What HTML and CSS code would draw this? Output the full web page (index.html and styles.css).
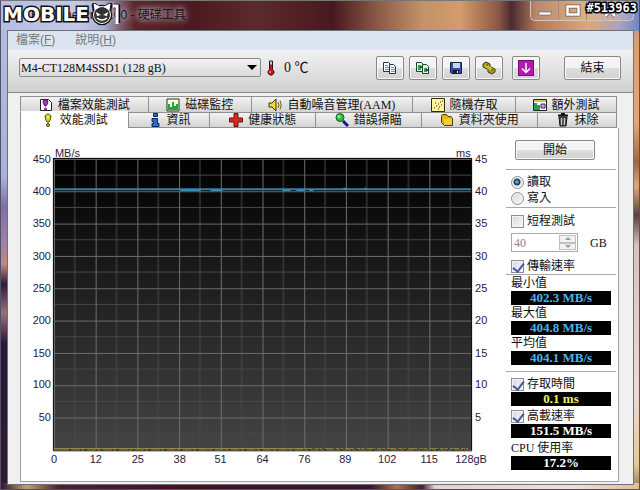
FILE: index.html
```html
<!DOCTYPE html>
<html lang="zh-Hant">
<head>
<meta charset="utf-8">
<title>HD Tune Pro - 硬碟工具</title>
<link rel="stylesheet" href="styles.css">
</head>
<body>
<div class="window">
  <header class="titlebar">
    <h1 class="title">HD Tune Pro 5.00 - 硬碟工具</h1>
    <div class="controls">
      <button class="ctl" aria-label="Minimize"><svg width="16" height="14" viewBox="0 0 16 14"><rect x="2" y="8" width="12" height="3" fill="#fff" stroke="#665c5c" stroke-width=".6"/></svg></button>
      <button class="ctl" aria-label="Maximize"><svg width="16" height="14" viewBox="0 0 16 14"><rect x="2.5" y="2.500" width="11" height="8" fill="none" stroke="#665c5c" stroke-width="4"/><rect x="2.500" y="2.500" width="11" height="8" fill="none" stroke="#fff" stroke-width="2.500"/></svg></button>
      <button class="ctl wide" aria-label="Close"><svg width="16" height="14" viewBox="0 0 16 14"><path d="M3 2 13 12M13 2 3 12" stroke="#665c5c" stroke-width="4"/><path d="M3 2 13 12M13 2 3 12" stroke="#fff" stroke-width="2.500"/></svg></button>
    </div>
    <div class="watermark"><span>MOBILE</span><svg width="30" height="23" viewBox="0 0 30 23"><g stroke="#111" stroke-width="4.500" fill="#111" stroke-linejoin="round"><circle cx="11" cy="12" r="8"/><path d="M4 8 3 2l5 3M18 8l1-6-5 3M23 3h4v17"/></g><circle cx="11" cy="12" r="8" fill="#333" stroke="#fff" stroke-width="2"/><path d="M4 7 3 1l6 3M18 7l1-6-6 3" fill="#fff" stroke="#fff"/><path d="M5 9l5 3-4 1zM17 9l-5 3 4 1z" fill="#fff"/><path d="M6 15q5 4 10 0" fill="none" stroke="#fff" stroke-width="1.500"/><path d="M22 3h4v18" fill="none" stroke="#fff" stroke-width="3"/></svg></div>
    <div class="serial">#513963</div>
  </header>

  <main class="client">
    <nav class="menu"><a href="#">檔案(<u>F</u>)</a><a href="#">說明(<u>H</u>)</a></nav>

    <div class="toolbar">
      <div class="drive">
        <select aria-label="Drive"><option>M4-CT128M4SSD1 (128 gB)</option></select>
        <svg class="arrow" width="10" height="5" viewBox="0 0 10 5"><path d="M0 0h10L5 5z"/></svg>
      </div>
      <div class="temp">
        <svg width="8" height="16" viewBox="0 0 8 16"><path d="M2.500 1h3v8.500a3 3 0 1 1-3 0z" fill="#c01818" stroke="#301010"/><path d="M3 1.500h2v3H3z" fill="#8de"/><circle cx="3" cy="12" r="1" fill="#f99"/></svg>
        <span>0 ℃</span>
      </div>
      <div class="tools">
        <button class="tool" aria-label="Copy text"><svg width="16" height="16" viewBox="0 0 16 16"><g fill="#f4f8ff" stroke="#22384e"><path d="M1.500 2.500h5l2 2v7h-7z"/><path d="M7.500 4.500h4l2 2v7h-6z"/></g><path d="M3 5.500h3M3 7.500h4M3 9.500h4M9 7.500h3M9 9.500h4M9 11.500h4" stroke="#38a0e8"/></svg></button>
        <button class="tool" aria-label="Copy image"><svg width="16" height="16" viewBox="0 0 16 16"><g fill="#e8f8e8" stroke="#223e2e"><path d="M1.500 2.500h5l2 2v7h-7z"/><path d="M7.500 4.500h4l2 2v7h-6z"/></g><path d="M3 5h3v5H3zM9 8h3v4H9z" fill="#28a848"/><path d="M5 6h2v2H5zM11 9h2v2h-2z" fill="#165828"/></svg></button>
        <button class="tool" aria-label="Save"><svg width="16" height="16" viewBox="0 0 16 16"><path d="M2.500 2.500h11v11h-10l-1-1z" fill="#3848a8" stroke="#182050"/><path d="M5 3h7v5H5z" fill="#c8d4e8"/><path d="M5 10h6v3H5z" fill="#15183a"/><path d="M9 11h1v2H9z" fill="#fff"/></svg></button>
        <button class="tool" aria-label="Settings"><svg width="16" height="16" viewBox="0 0 16 16"><g fill="#a8a018" stroke="#38380a"><path d="m2 4 3-2 4 2v3L6 9 2 7z"/><path d="m7 9 3-2 4 2v3l-3 2-4-2z"/></g><path d="m4 5 7 5" stroke="#c8c040" stroke-width="3"/><path d="M5 5h2M10 10h2" stroke="#38380a"/></svg></button>
        <button class="tool last" aria-label="Download"><svg width="16" height="16" viewBox="0 0 16 16"><rect x=".5" y=".5" width="15" height="15" fill="#b419b4" stroke="#701070"/><path d="M8 3v9M4 8.500 8 12.500l4-4" fill="none" stroke="#fff" stroke-width="1.500"/></svg></button>
        <button class="exit">結束</button>
      </div>
    </div>

    <div class="content">
      <div class="tabs" role="tablist">
        <div class="tabrow back">
          <button class="tab t128" role="tab"><svg viewBox="0 0 14 14"><path d="M1.500 1.500h8l3 3v8h-11z" fill="#fff" stroke="#222"/><path d="M4 3q3-3 5 0 0 3-2 5H6Q4 6 4 3z" fill="#b030c0" stroke="#501060"/><circle cx="6.500" cy="11" r="1.500" fill="#902090"/></svg>檔案效能測試</button>
          <button class="tab t103" role="tab"><svg viewBox="0 0 14 14"><path d="M1 1h12v12H1z" fill="#ffffd8" stroke="#183818"/><path d="M2 12V6h2v3h2V4h2v4h2V6h2v6z" fill="#18a848"/></svg>磁碟監控</button>
          <button class="tab t162" role="tab"><svg viewBox="0 0 14 14"><path d="M1 5h3l4-4v12L4 9H1z" fill="#f0e020" stroke="#383008"/><path d="M10 4q2 3 0 6M12 2.500q2.500 4.500 0 9" fill="none" stroke="#68601a"/></svg>自動噪音管理(AAM)</button>
          <button class="tab t103" role="tab"><svg viewBox="0 0 14 14"><path d="M.5.500h13v13H.500z" fill="#fff4a0" stroke="#302810"/><path d="M3 10h1M5 8h1M4 5h1M8 9h1M7 6h1M9 4h1M11 3h1M10 7h1M7 11h1" stroke="#906020" stroke-width="1.500"/></svg>隨機存取</button>
          <button class="tab t101" role="tab"><svg viewBox="0 0 14 14"><path d="M.5 1.500h13v11H.500z" fill="#fff" stroke="#222"/><path d="M1 2h12v2H1z" fill="#d8c050"/><path d="M1 5h3v2h3v5H1z" fill="#20a050"/><path d="M8 6h4v4H8z" fill="#b8a0e0" stroke="#402880"/></svg>額外測試</button>
        </div>
        <div class="tabrow front">
          <button class="tab t108 active" role="tab" aria-selected="true"><svg viewBox="0 0 14 14"><path d="M4 3q3-4 6 0 0 3-2 6H6Q4 6 4 3z" fill="#e8e020" stroke="#484808"/><circle cx="7" cy="12" r="1.500" fill="#c8c020" stroke="#484808"/></svg>效能測試</button>
          <button class="tab t82" role="tab"><svg viewBox="0 0 14 14"><path d="M5.500.500h4v3h-4zM4 5.500h5.500v5H11v3H4v-3h1.500v-2H4z" fill="#2070d0" stroke="#082850"/></svg>資訊</button>
          <button class="tab t106" role="tab"><svg viewBox="0 0 14 14"><path d="M5 .5h4V5h4.500v4H9v4.500H5V9H.500V5H5z" fill="#d82820" stroke="#681010"/></svg>健康狀態</button>
          <button class="tab t106" role="tab"><svg viewBox="0 0 14 14"><path d="m8 8 5 5" stroke="#101898" stroke-width="3"/><circle cx="5" cy="4.500" r="4" fill="#38c040" stroke="#106018"/><circle cx="4" cy="3.500" r="1.500" fill="#98f098"/></svg>錯誤掃瞄</button>
          <button class="tab t117" role="tab"><svg viewBox="0 0 14 14"><path d="M1.500 3.500v-1l1-1h4l1.500 2h3l1.500 2v7h-8l-3-3z" fill="#e0b818" stroke="#483808"/><path d="M4 6h8v6H5z" fill="#f0d040"/></svg>資料夾使用</button>
          <button class="tab t79" role="tab"><svg viewBox="0 0 14 14"><path d="M3 4h8l-1 9H4z" fill="#555" stroke="#111"/><path d="M2 2.500h10M5 1h4" stroke="#111" stroke-width="2"/><path d="M5.500 5v7M8.500 5v7" stroke="#ccc"/></svg>抹除</button>
        </div>
      </div>

      <div class="page">
        <svg class="chart" viewBox="20 128 486 350">
          <defs>
            <linearGradient id="plot" x1="0" y1="0" x2="0" y2="1"><stop offset="0" stop-color="#000"/><stop offset="1" stop-color="#444"/></linearGradient>
            <pattern id="minor" x="53" y="159" width="41.800" height="32.400" patternUnits="userSpaceOnUse"><path d="M20.900 0v32.400M0 16.200h41.800" stroke="#484848" fill="none"/></pattern>
            <pattern id="major" x="53" y="159" width="41.800" height="32.400" patternUnits="userSpaceOnUse"><path d="M.5 0v32.400M0 .500h41.800" stroke="#6c6c6c" fill="none"/></pattern>
          </defs>
          <rect x="52" y="158" width="420" height="293" fill="url(#plot)"/>
          <rect x="53" y="159" width="418" height="291" fill="url(#minor)"/>
          <rect x="53" y="159" width="418" height="291" fill="url(#major)"/>
          <path d="M52.500 451V158.500h419V451" fill="none" stroke="#111"/>
          <path d="M54 189.500h417" stroke="#367fa8" stroke-width="2"/>
          <path d="M180 190.500h20m10 0h12m60 0h8m6 0h8m5 0h4m30-2h3m18 0h2" stroke="#4aa0cc"/>
          <path d="M52 451.500h420" stroke="#222010"/>
          <path d="M53 449.500h250" stroke="#b6a83c"/><path d="M303 449.500h165" stroke="#a89c38" stroke-dasharray="9 2 4 1 3 2"/>
          <path d="M68 450.500h400" stroke="#111" stroke-dasharray="2 9 1 4"/>
          <g class="axis end"><text x="50" y="163">450</text><text x="50" y="195">400</text><text x="50" y="227">350</text><text x="50" y="260">300</text><text x="50" y="292">250</text><text x="50" y="324">200</text><text x="50" y="357">150</text><text x="50" y="389">100</text><text x="50" y="422">50</text></g>
          <g class="axis"><text x="475" y="163">45</text><text x="475" y="195">40</text><text x="475" y="227">35</text><text x="475" y="260">30</text><text x="475" y="292">25</text><text x="475" y="324">20</text><text x="475" y="357">15</text><text x="475" y="389">10</text><text x="475" y="422">5</text></g>
          <g class="axis mid"><text x="53" y="464">0</text><text x="95" y="464">12</text><text x="137" y="464">25</text><text x="179" y="464">38</text><text x="220" y="464">51</text><text x="262" y="464">64</text><text x="304" y="464">76</text><text x="345" y="464">89</text><text x="387" y="464">102</text><text x="429" y="464">115</text><text x="471" y="464">128gB</text></g>
          <g class="axis"><text x="54" y="157">MB/s</text><text x="456" y="157">ms</text></g>
        </svg>

        <aside class="side">
          <button class="start">開始</button>
          <div class="group modes">
            <label class="row"><input type="radio" name="mode" checked>讀取</label>
            <label class="row"><input type="radio" name="mode">寫入</label>
          </div>
          <div class="group short">
            <label class="row"><input type="checkbox">短程測試</label>
            <div class="size">
              <div class="spin">
                <input type="number" id="size" value="40" disabled>
                <div class="steps"><button disabled aria-label="Increase"><svg width="6" height="3" viewBox="0 0 6 3"><path d="M0 3h6L3 0z" fill="#999"/></svg></button><button disabled aria-label="Decrease"><svg width="6" height="3" viewBox="0 0 6 3"><path d="M0 0h6L3 3z" fill="#999"/></svg></button></div>
              </div>
              <label for="size">GB</label>
            </div>
            <label class="row"><input type="checkbox" checked>傳輸速率</label>
          </div>
          <div class="group rates">
            <div class="row">最小值</div><output class="blue">402.3 MB/s</output>
            <div class="row">最大值</div><output class="blue">404.8 MB/s</output>
            <div class="row">平均值</div><output class="blue">404.1 MB/s</output>
          </div>
          <div class="group other">
            <label class="row"><input type="checkbox" checked>存取時間</label><output class="yellow">0.1 ms</output>
            <label class="row"><input type="checkbox" checked>高載速率</label><output>151.5 MB/s</output>
            <div class="row">CPU 使用率</div><output>17.2%</output>
          </div>
        </aside>
      </div>
    </div>
  </main>
</div>
</body>
</html>
```
FILE: styles.css
```css
* { box-sizing: border-box; }

body {
  margin: 0;
  font: 12px/16px "Liberation Serif", "Noto Sans CJK TC", serif;
  color: #111;
}

button, input, select {
  font: inherit;
  color: inherit;
  margin: 0;
}

button { padding: 0; }

svg { display: block; flex: none; }

/* Glass frame over the wallpaper */
.window {
  min-height: 100vh;
  display: flex;
  flex-direction: column;
  padding: 0 5px 4px 6px;
  border: 1px solid #55506a;
  border-top-color: #777;
  background:
    linear-gradient(90deg, #b4bedf 0, #c3cae6 12%, #aab0d4 16%, #7a5468 19%, #5a2428 21%, #4a1a20 30%, #5a2a2c 40%, #47181e 52%, #8a5a48 59%, #c39268 66%, #d39c6c 72%, #8a5844 78%, #4b2a30 80%, #b07a5c 84%, #dba878 92%, #a9a2c0 97%, #6f86c8 100%) top / 100% 30px no-repeat,
    linear-gradient(90deg, #2a1630 0, #c0a070 4%, #4a2030 9%, #40141c 30%, #381628 58%, #b07050 62%, #402028 66%, #e8cfd0 68%, #f2dcd8 90%, #e0c090 100%) bottom / 100% 6px no-repeat,
    linear-gradient(180deg, #b4bedf 0, #a8b2d8 36%, #8070a8 42%, #a480a8 50%, #c08878 54%, #2d1c3a 58%, #9a7078 64%, #2b1838 70%, #301a30 100%) left / 7px 100% no-repeat,
    linear-gradient(180deg, #8090cc 0, #d8a070 8%, #e0a878 25%, #9a6848 33%, #d8a880 38%, #5a4038 44%, #d8c0c0 50%, #f0d8d8 80%, #e4c898 95%, #907868 100%) right / 7px 100% no-repeat;
}

.titlebar {
  position: relative;
  height: 29px;
  display: flex;
  align-items: flex-start;
  justify-content: space-between;
}

.title {
  margin: 6px 0 0 24px;
  font: 12px/16px "Liberation Sans", "Noto Sans CJK TC", sans-serif;
  color: #18121c;
  text-shadow: 0 0 5px #c8c0d0, 0 0 8px #c8c0d0;
}

.controls {
  display: flex;
  height: 20px;
  border: 1px solid #d8c4b4;
  border-top: 0;
  border-radius: 0 0 5px 5px;
}

.ctl {
  width: 28px;
  display: grid;
  place-items: center;
  background: rgba(255, 230, 210, .15);
  border: 0;
  border-right: 1px solid #a88878;
}

.ctl.wide { width: 46px; border-right: 0; }

.watermark {
  position: absolute;
  left: -4px;
  top: 2px;
  display: flex;
  align-items: center;
  gap: 2px;
  font: bold 20px/23px "DejaVu Sans", sans-serif;
  color: #fff;
  -webkit-text-stroke: 3px #111;
  paint-order: stroke fill;
}

.serial {
  position: absolute;
  right: -3px;
  top: 0;
  font: bold 12px/15px "DejaVu Sans Mono", monospace;
  color: #fff;
  -webkit-text-stroke: 3px #000;
  paint-order: stroke fill;
}

.client {
  flex: 1;
  display: flex;
  flex-direction: column;
  border: 1px solid #6f7078;
  background: #f0f0f0;
}

.menu {
  display: flex;
  gap: 20px;
  height: 19px;
  padding: 1px 8px;
  background: #dce5ef;
}

.menu a {
  color: #777;
  text-decoration: none;
  font-family: "Liberation Sans", "Noto Sans CJK TC", sans-serif;
}

.toolbar {
  display: flex;
  align-items: flex-start;
  height: 43px;
  padding: 6px 12px 0 11px;
  background: linear-gradient(#f2f2f2, #d0d0d0);
  border-bottom: 1px solid #8c8c8c;
}

.drive { position: relative; flex: 0 1 242px; margin-top: 2px; }

.drive select {
  display: block;
  width: 100%;
  height: 19px;
  padding: 0 1px;
  appearance: none;
  border: 1px solid #888;
  border-radius: 2px;
  background: linear-gradient(#f2f2f2, #dadada);
}

.arrow { position: absolute; right: 4px; top: 7px; }

.temp {
  display: flex;
  align-items: center;
  gap: 9px;
  margin: 4px 0 0 6px;
  font-size: 14px;
}

.tools { display: flex; gap: 5px; margin-left: auto; }

.tool, .exit, .start {
  border: 1px solid #888;
  border-radius: 2px;
  background: linear-gradient(#f4f4f4 50%, #dedede 50%, #d2d2d2);
  box-shadow: inset 0 0 0 1px #f8f8f8;
}

.tool {
  display: grid;
  place-items: center;
  width: 28px;
  height: 24px;
}

.tool.last { margin-left: 4px; }

.exit { width: 57px; height: 24px; margin-left: 19px; }

.content {
  flex: 1;
  display: flex;
  flex-direction: column;
  padding: 3px 14px 2px 12px;
}

.tabs { padding-right: 2px; }

.tabrow { display: flex; height: 16px; }

.tab {
  display: flex;
  align-items: center;
  justify-content: center;
  gap: 5px;
  min-width: 0;
  border: 1px solid #909090;
  border-width: 1px 1px 0 0;
  background: linear-gradient(#f2f2f2, #d4d4d4);
  white-space: nowrap;
}

.tab svg { width: 14px; height: 14px; }
.tab:first-child { border-left-width: 1px; }

.t79 { flex: 79; }
.t82 { flex: 82; }
.t101 { flex: 101; }
.t103 { flex: 103; }
.t106 { flex: 106; }
.t108 { flex: 108; }
.t117 { flex: 117; }
.t128 { flex: 128; }
.t162 { flex: 162; }

.tab.active {
  z-index: 1;
  margin-top: -1px;
  background: #fff;
  border-top-color: #fff;
}

.front .tab:not(.active) { border-bottom-width: 1px; }

.page {
  flex: 1;
  display: flex;
  align-items: flex-start;
  background: #fff;
  border: 1px solid #a0a0a0;
  border-top: 0;
}

.chart { flex: 1; min-width: 0; height: auto; }

.axis { font: 11px "Liberation Sans", sans-serif; fill: #2c2038; }
.end { text-anchor: end; }
.mid { text-anchor: middle; }

.side { flex: none; width: 110px; margin-right: 2px; }

.start {
  display: block;
  width: 80px;
  height: 20px;
  margin: 12px 0 9px 9px;
  line-height: 16px;
}

.group { padding-left: 5px; border-top: 1px solid #a8a8a8; }

.row {
  display: flex;
  align-items: center;
  gap: 3px;
  height: 16px;
}

.row input {
  appearance: none;
  flex: none;
  width: 13px;
  height: 13px;
  border: 1px solid #8e8f8f;
  background: linear-gradient(135deg, #d4d8dc, #fafafa);
  box-shadow: inset 0 0 0 1px #f4f4f4;
}

.row input[type="radio"] { border-radius: 50%; }

.row input[type="radio"]:checked {
  background: radial-gradient(circle at 45% 45%, #9ed4f0 0, #1c5f8c 2px, #123c5c 3px, #dfe8ee 4px);
}

.row input[type="checkbox"]:checked::before {
  content: "";
  display: block;
  width: 5px;
  height: 9px;
  margin: 0 0 0 3px;
  border: solid #4358a8;
  border-width: 0 2px 2px 0;
  transform: rotate(38deg);
}

.modes { padding-top: 4px; padding-bottom: 1px; }
.short { padding-top: 5px; }

.size {
  display: flex;
  align-items: center;
  gap: 12px;
  margin: 4px 0 6px;
}

.spin {
  display: flex;
  width: 67px;
  height: 19px;
  padding: 1px;
  border: 1px solid #aaa;
}

.spin input {
  flex: 1;
  min-width: 0;
  padding: 0 1px;
  border: 0;
  background: #fff;
  color: #888;
  appearance: textfield;
}

.spin input::-webkit-inner-spin-button { display: none; }

.steps { display: grid; width: 17px; }

.steps button {
  display: grid;
  place-items: center;
  border: 1px solid #c0c0c0;
  background: #f2f2f2;
}

output {
  display: block;
  width: 100px;
  height: 14px;
  background: #000;
  color: #fff;
  font-size: 13px;
  font-weight: bold;
  line-height: 14px;
  text-align: center;
}

.rates { padding-bottom: 6px; }
.other { padding-top: 4px; }
.other output { margin-bottom: 2px; }
.blue { color: #48b4ec; }
.yellow { color: #f0f060; }
```
